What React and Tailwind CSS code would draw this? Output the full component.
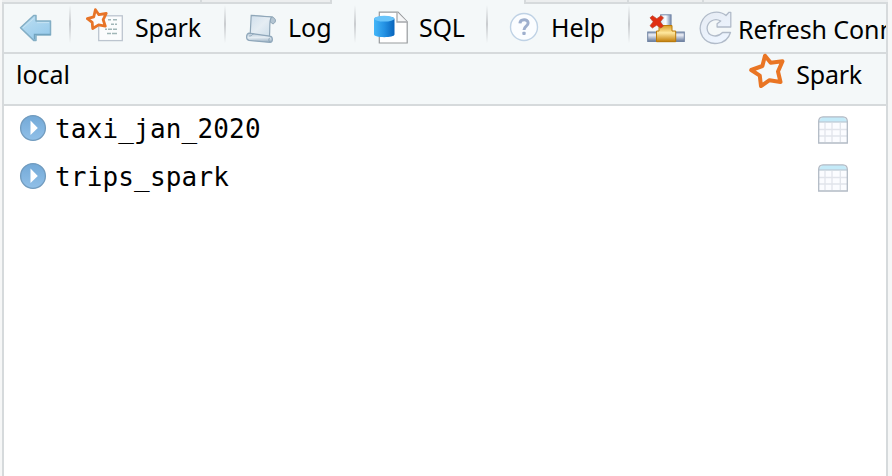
import React from "react";

function Separator({ className }) {
  return (
    <div className={`h-[38px] w-[2px] shrink-0 self-start mt-[1px] bg-linear-to-b from-[#f4f8f9] via-[#c9cccf] to-[#f4f8f9] ${className}`} />
  );
}

function Label({ className, children }) {
  return <span className={`block shrink-0 whitespace-nowrap leading-[34px] ${className}`}>{children}</span>;
}

function BackArrow() {
  return (
    <svg width="34" height="28" viewBox="0 0 34 28" className="shrink-0">
      <defs>
        <linearGradient id="back" x1="0" x2="0.7" y2="1">
          <stop stopColor="#bddff2" /><stop offset="1" stopColor="#96caeb" />
        </linearGradient>
      </defs>
      <path d="M1.5 13.8L14.7 1.5H17V7H31.5V21H17V26.4H14.7Z" fill="url(#back)" stroke="#83aec5" strokeWidth="1.5" strokeLinejoin="round" />
      <path d="M4 13.8L15.3 4M18 8.6H30" fill="none" stroke="#c5e3f3" strokeWidth="1" />
      <path d="M15.4 25.5V20.4H31.5" fill="none" stroke="#72a4bf" strokeWidth="1.2" />
    </svg>
  );
}

function SparkPageIcon() {
  return (
    <svg width="38" height="34" viewBox="0 0 38 34" className="shrink-0">
      <rect x="12.7" y="7.8" width="23.6" height="24.8" fill="#fbfcfd" stroke="#bcc5cf" strokeWidth="1.3" />
      <g stroke="#a1b6b8" strokeWidth="1.5">
        <path d="M22 11.8h3M27 11.8h4M25 16.2h3M29 16.2h2M19 21.2h2M22 21.2h4M27 21.2h4M21 25.5h4M26 25.5h5" />
      </g>
      <path d="M9.4 1.7L12.9 6.7L20.2 5.5L17.2 11.7L19.3 18.2L12.6 16.9L6.7 20.5L6.2 14.4L1.4 10.7L7.8 8.8Z" fill="#fbfcfd" stroke="#e77428" strokeWidth="2.8" strokeLinejoin="round" />
    </svg>
  );
}

function LogIcon() {
  return (
    <svg width="31" height="30" viewBox="0 0 31 30" className="shrink-0">
      <defs>
        <linearGradient id="paper" x1="0" x2="1" y2="1">
          <stop stopColor="#d0dfec" /><stop offset="0.5" stopColor="#e5edf3" /><stop offset="1" stopColor="#cbdde9" />
        </linearGradient>
        <linearGradient id="roll" x1="0" x2="0.1" y2="1">
          <stop stopColor="#b6c8d7" /><stop offset="0.5" stopColor="#e6eef4" /><stop offset="1" stopColor="#9eb4c6" />
        </linearGradient>
      </defs>
      <path d="M5 1.5L25 3C30 3.2 31 8 27 10L23.8 7.5Z" fill="#b4c5d2" stroke="#91a7b8" />
      <path d="M5.2 1.3L25.7 3C23 5 24.2 10 23.5 22.5L4.2 20.3Z" fill="url(#paper)" stroke="#8fa6b8" strokeWidth="1.2" />
      <path d="M3 19.2L23.5 22.2C27.4 22.6 27.1 28.3 24 28.4L3 26.4C-.2 25.7-.2 20.1 3 19.2Z" fill="url(#roll)" stroke="#8fa7ba" strokeWidth="1.2" />
      <path d="M3.2 22C7 22 6 19.8 7.5 20M24 23.6C22.4 25 22.4 27 24 28" stroke="#8fa7ba" fill="none" />
    </svg>
  );
}

function SqlIcon() {
  return (
    <svg width="36" height="34" viewBox="0 0 36 34" className="shrink-0">
      <defs>
        <linearGradient id="database"><stop stopColor="#43b6f8" /><stop offset="0.5" stopColor="#2492e4" /><stop offset="1" stopColor="#0864bc" /></linearGradient>
      </defs>
      <path d="M6.3 1.2H25L34.2 10.7V32H6.3Z" fill="#fff" stroke="#989b9e" strokeWidth="1.2" />
      <path d="M24 1.2V11H34.2" fill="#f5f6f7" stroke="#a5a8ac" strokeWidth="1.3" />
      <path d="M1 8C1 4.2 21.5 4.2 21.5 8V23.5C21.5 27 1 27 1 23.5Z" fill="url(#database)" />
      <ellipse cx="11.2" cy="7.7" rx="10.2" ry="2.9" fill="#68c4fa" />
    </svg>
  );
}

function HelpIcon() {
  return (
    <svg width="30" height="30" viewBox="0 0 30 30" className="shrink-0">
      <circle cx="15" cy="15" r="13.5" fill="#fbfdff" stroke="#bfd2e5" strokeWidth="1.4" />
      <path d="M10.9 11.4C11.2 6.8 19 6.5 19.1 11C19.1 14.2 15 14 15 18" fill="none" stroke="#9eafcd" strokeWidth="3" />
      <rect x="13.3" y="19.7" width="3.4" height="3.4" rx="1" fill="#9eafcd" />
    </svg>
  );
}

function DisconnectIcon() {
  return (
    <svg width="38" height="29" viewBox="0 0 38 29" className="shrink-0">
      <defs>
        <linearGradient id="pipe" x2="0" y2="1"><stop stopColor="#8294b1" /><stop offset="0.3" stopColor="#eef1f8" /><stop offset="1" stopColor="#65799b" /></linearGradient>
        <linearGradient id="pipeV"><stop stopColor="#dce4ef" /><stop offset="0.5" stopColor="#fafdff" /><stop offset="1" stopColor="#7187aa" /></linearGradient>
        <linearGradient id="brass" x2="0" y2="1"><stop stopColor="#d79b24" /><stop offset="0.45" stopColor="#ffe89e" /><stop offset="1" stopColor="#c27d08" /></linearGradient>
      </defs>
      <rect x="13.6" y="0.8" width="10.5" height="17" fill="url(#pipeV)" stroke="#788bac" />
      <rect x="0.7" y="18" width="36.6" height="9.5" fill="url(#pipe)" stroke="#7184a3" />
      <path d="M12 11.5H25V17H28.7V27.7H9.5V17H12Z" fill="url(#brass)" stroke="#bc7b08" />
      <path d="M5.5 1.7L9.8 4.7L14 1.7L16.5 3.8L13.3 7.8L16.5 12L13.8 14L9.6 11.2L5.4 14L3 11.7L6.2 7.8L3 3.8Z" fill="#e02f12" stroke="#b9452c" strokeWidth="0.7" />
    </svg>
  );
}

function RefreshIcon() {
  return (
    <svg width="33" height="34" viewBox="0 0 33 34" className="shrink-0">
      <defs><linearGradient id="refresh" x2="0.5" y2="1"><stop stopColor="#e6ebf3" /><stop offset="1" stopColor="#edf5ff" /></linearGradient></defs>
      <path d="M31.8 1.3V16H18.1V12.8L21.7 10C15 6 8 11.5 8.1 17.5C8.5 25.3 18 27.5 23.5 21.5H31.5C27.5 34.7 10 35.8 3.5 25.7C-2 16.5 3 5 12 2C17.5.3 23 1.2 27 4.5L30 1.3Z" fill="url(#refresh)" stroke="#b1bbc9" strokeWidth="1.3" strokeLinejoin="round" />
    </svg>
  );
}

function ExpandIcon() {
  return (
    <svg width="28" height="28" viewBox="0 0 28 28" className="mb-[5px] shrink-0">
      <defs><linearGradient id="expand" x2="0" y2="1"><stop stopColor="#73a9d7" /><stop offset="1" stopColor="#91c0e8" /></linearGradient></defs>
      <circle cx="14" cy="14" r="12.4" fill="url(#expand)" stroke="#719bbe" strokeWidth="1.3" />
      <path d="M11.5 6.6L18.8 14L11.5 21Z" fill="#fff" />
    </svg>
  );
}

function TableIcon() {
  return (
    <svg width="30" height="28" viewBox="0 0 30 28" className="shrink-0">
      <path d="M.7 27V5L4.5 1H25.5L29.3 5V27Z" fill="#fbfcff" />
      <path d="M1 5.8V4.5L4.5 1H25.5L29 4.5V5.8Z" fill="#c4eaf8" />
      <path d="M7 7V26M14 7V26M22.3 7V26M1 13.5H29M1 20H29" stroke="#e1e4eb" strokeWidth="1.3" />
      <path d="M1 6H29" stroke="#aebdca" strokeWidth="1" />
      <path d="M.7 27V5Q1 1 5 .8H25Q29 1 29.3 5V27Z" fill="none" stroke="#b2bac5" strokeWidth="1.3" />
    </svg>
  );
}

function TableRow({ name }) {
  return (
    <div className="flex h-12 items-center pl-[15px] pr-[38px]">
      <ExpandIcon />
      <span className="mb-[3px] ml-[8px] font-['DejaVu_Sans_Mono',monospace] text-[26px] leading-[32px] tracking-[0.17px]">{name}</span>
      <div className="mb-[1px] ml-auto"><TableIcon /></div>
    </div>
  );
}

export default function App() {
  return (
    <div className="flex h-[476px] w-[892px] flex-col overflow-hidden bg-[#f6f7f7] pr-1 pl-[2px] font-['Noto_Sans',sans-serif] text-[25px] text-black">
      <div className="flex h-1 shrink-0 bg-[#eceeef]">
        <div className="w-[200px] border-r-2 border-b-2 border-[#d6dadc]" />
        <div className="w-[130px] border-r-2 border-b-2 border-[#d6dadc]" />
        <div className="w-[192px] bg-[#f4f8f9]" />
        <div className="w-[105px] border-x-2 border-b-2 border-[#d6dadc]" />
        <div className="w-[75px] border-r-2 border-b-2 border-[#d6dadc]" />
        <div className="flex-1 border-b-2 border-[#d6dadc]" />
      </div>
      <main className="flex min-h-0 flex-1 flex-col border-x-2 border-[#d6dadc] bg-white">
        <div className="flex h-[50px] shrink-0 items-center overflow-hidden border-b-2 border-[#d6dadc] bg-[#f4f8f9]">
          <div className="ml-[15px]"><BackArrow /></div>
          <Separator className="ml-[16px]" />
          <div className="mb-[6px] ml-[15px]"><SparkPageIcon /></div>
          <Label className="mb-[3px] ml-[11px] w-[65px] tracking-[-0.2px]">Spark</Label>
          <Separator className="ml-[24px]" />
          <div className="mt-[2px] ml-[20px]"><LogIcon /></div>
          <Label className="mb-[3px] ml-[11px] w-[42px]">Log</Label>
          <Separator className="ml-[24px]" />
          <div className="mb-[1px] ml-[17px]"><SqlIcon /></div>
          <Label className="mb-[3px] ml-[10px] w-[45px] tracking-[-0.3px]">SQL</Label>
          <Separator className="ml-[22px]" />
          <div className="mb-[3px] ml-[21px]"><HelpIcon /></div>
          <Label className="mb-[3px] ml-[12px] w-[54px] tracking-[-0.1px]">Help</Label>
          <Separator className="ml-[23px]" />
          <div className="ml-[17px]"><DisconnectIcon /></div>
          <div className="mb-[1px] ml-[14px]"><RefreshIcon /></div>
          <Label className="mt-[1px] ml-[6px] tracking-[-0.1px]">Refresh Connection Data</Label>
        </div>
        <div className="flex h-[52px] shrink-0 items-center justify-between border-b-2 border-[#d6dadc] bg-[#f4f8f9] pr-[24px] pl-[12px]">
          <Label className="mb-[10px]">local</Label>
          <div className="flex items-center gap-[11px]">
            <svg width="36" height="36" viewBox="0 0 36 36" className="mb-[16px] shrink-0">
              <path d="M16 2.8L21.7 9.8L33.5 8.2L29 18.5L31.5 29L20.5 27.2L12 33L10.8 22.7L2.2 17L13.4 13Z" fill="none" stroke="#e97524" strokeWidth="4" strokeLinejoin="round" />
            </svg>
            <Label className="mb-[10px] tracking-[-0.2px]">Spark</Label>
          </div>
        </div>
        <TableRow name="taxi_jan_2020" />
        <TableRow name="trips_spark" />
      </main>
    </div>
  );
}
